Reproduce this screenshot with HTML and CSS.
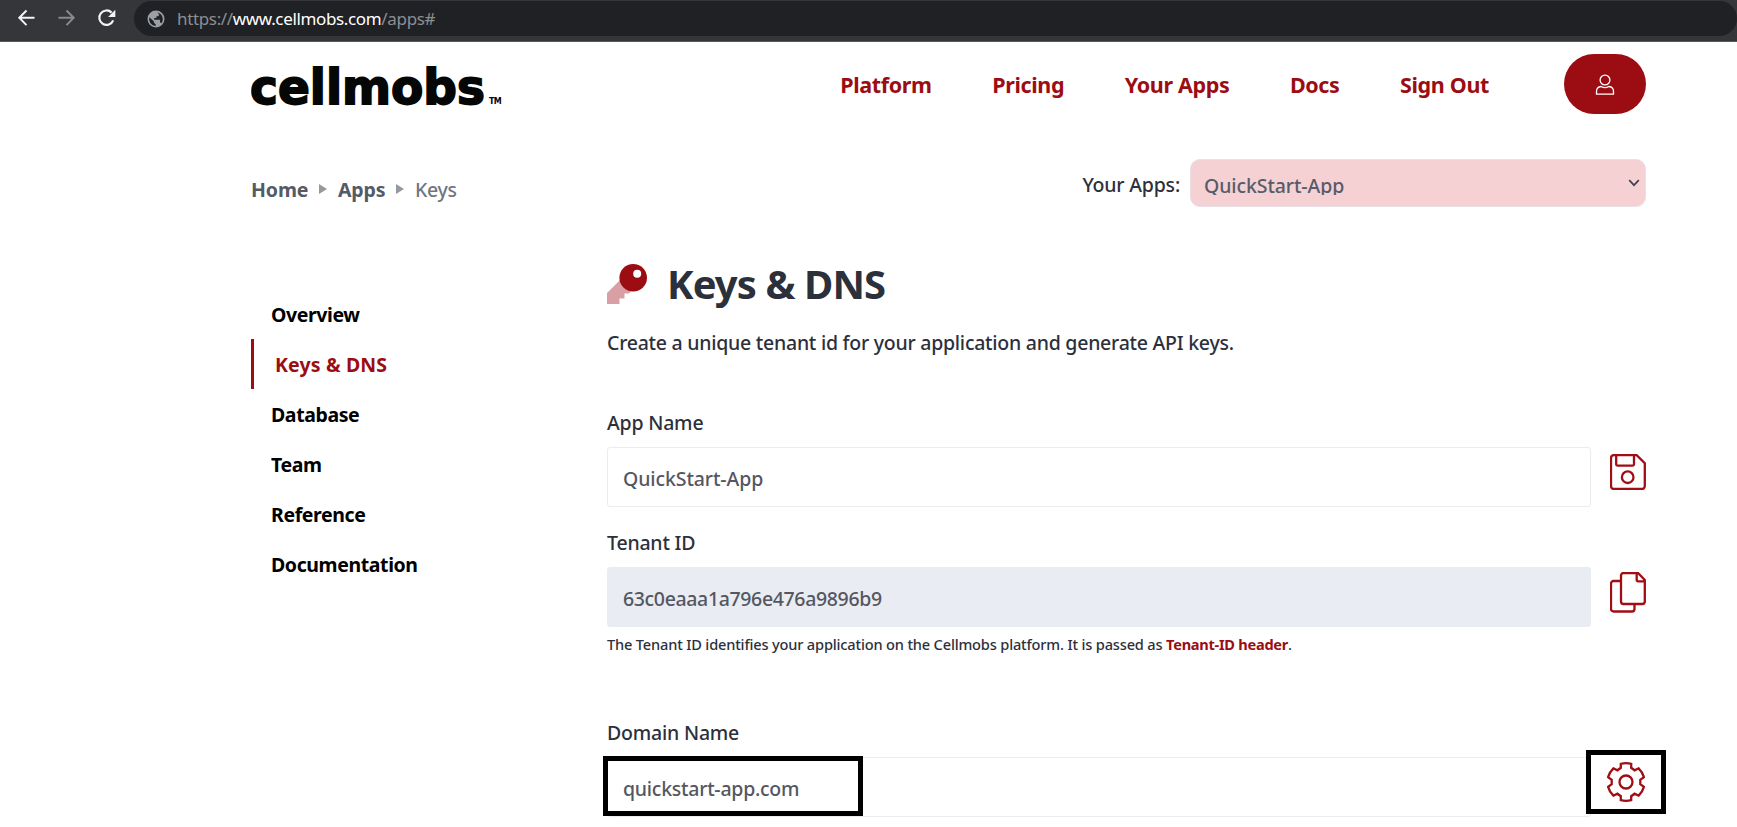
FILE: index.html
```html
<!DOCTYPE html>
<html lang="en">
<head>
<meta charset="utf-8">
<title>Keys &amp; DNS</title>
<link rel="stylesheet" href="styles.css">
</head>
<body>
<div class="browser-bar">
  <svg class="nav-icons" width="134" height="36" viewBox="0 0 134 36" fill="none" stroke-width="2">
    <path d="M34.5 17.8H19.8M26.5 10.5L19.3 17.8L26.5 25.1" stroke="#f1f3f4"/>
    <path d="M58.5 17.8H73.2M66.5 10.5L73.7 17.8L66.5 25.1" stroke="#87898d"/>
    <path d="M113.2 20.3A7.2 7.2 0 1 1 111.6 12.6" stroke="#f1f3f4" stroke-width="2.2"/>
    <path d="M115.3 9.8V17H108.1Z" fill="#f1f3f4"/>
  </svg>
  <div class="address">
    <svg class="globe" width="18" height="18" viewBox="0 0 18 18">
      <circle cx="9" cy="9" r="8.5" fill="#9aa0a6"/>
      <path d="M2.2 7.2L6.8 11.2V12.6L8.8 14.4V15.8C5 15.7 2.2 12.8 2.2 9.2ZM10.5 2.4C13.6 3.1 15.8 5.8 15.8 9C15.8 10.6 15.3 12 14.5 13.2L13 12.2V9.8H7.2V8H9.4V6.2H11.4L12.2 4.6Z" fill="#202124"/>
    </svg>
    <span class="url">https://<b>www.cellmobs.com</b>/apps#</span>
  </div>
</div>

<div class="page">
  <header class="site-header">
    <svg class="logo" width="238" height="60" viewBox="0 0 238 60">
      <text class="logo-word" x="-1" y="41.8" textLength="235" lengthAdjust="spacingAndGlyphs">cellmobs</text>
    </svg>
    <span class="tm">TM</span>
    <nav class="main-nav">
      <a>Platform</a><a>Pricing</a><a>Your Apps</a><a>Docs</a><a>Sign Out</a>
    </nav>
    <button class="account">
      <svg width="20" height="22" viewBox="0 0 20 22" fill="none" stroke="#fff" stroke-width="1.3">
        <circle cx="10" cy="6" r="4.9"/>
        <path d="M1.5 20.2V17.5C1.5 14.5 3.2 12.8 6 12.5C8.5 14 11.5 14 14 12.5C16.8 12.8 18.5 14.5 18.5 17.5V20.2Z"/>
      </svg>
    </button>
  </header>

  <div class="sub-header">
    <div class="crumbs">
      <b>Home</b><i class="arrow"></i><b>Apps</b><i class="arrow"></i><span>Keys</span>
    </div>
    <div class="picker">
      <span class="picker-label">Your Apps:</span>
      <div class="select">
        <span>QuickStart-App</span>
        <svg width="12" height="8" viewBox="0 0 12 8" fill="none" stroke="#40434c" stroke-width="1.7"><path d="M1.2 1.2L6 6.2L10.8 1.2"/></svg>
      </div>
    </div>
  </div>

  <div class="columns">
    <aside class="side-nav">
      <a>Overview</a><a class="active">Keys &amp; DNS</a><a>Database</a><a>Team</a><a>Reference</a><a>Documentation</a>
    </aside>
    <main class="content">
      <h1 class="title">
        <svg width="40" height="40" viewBox="0 0 40 40">
          <path d="M0 29L14 15L25 26L22 29.5H17.5V34.5H12.5V40H0Z" fill="#d8a0a4"/>
          <circle cx="26.2" cy="13.8" r="13.8" fill="#9c0d13"/>
          <circle cx="30.2" cy="9.8" r="4" fill="#fff"/>
        </svg>
        <span>Keys &amp; DNS</span>
      </h1>
      <p class="lead">Create a unique tenant id for your application and generate API keys.</p>

      <section class="field">
        <label>App Name</label>
        <div class="row">
          <div class="input">QuickStart-App</div>
          <svg class="action save" width="36" height="36" viewBox="0 0 36 36">
            <path d="M4 1H26.5L34.8 9.3V32A3 3 0 0 1 31.8 35H4A3 3 0 0 1 1 32V4A3 3 0 0 1 4 1ZM6.2 1V10.2A1.5 1.5 0 0 0 7.7 11.7H22.5A1.5 1.5 0 0 0 24 10.2V1"/>
            <circle cx="17.7" cy="23.2" r="5.8"/>
          </svg>
        </div>
      </section>

      <section class="field">
        <label>Tenant ID</label>
        <div class="row">
          <div class="input disabled">63c0eaaa1a796e476a9896b9</div>
          <svg class="action copy" width="36" height="41" viewBox="0 0 36 41">
            <path d="M13.5 1H28L34.8 8V29.5A2.5 2.5 0 0 1 32.3 32H13.5A2.5 2.5 0 0 1 11 29.5V3.5A2.5 2.5 0 0 1 13.5 1ZM26.7 1V7.8A1.5 1.5 0 0 0 28.2 9.3H34.8M11 9H3.5A2.5 2.5 0 0 0 1 11.5V37A2.5 2.5 0 0 0 3.5 39.5H22A2.5 2.5 0 0 0 24.5 37V32"/>
          </svg>
        </div>
        <p class="help"><span>The Tenant ID identifies your application on the Cellmobs platform. It is passed as </span><b>Tenant-ID header</b>.</p>
      </section>

      <section class="field domain">
        <label>Domain Name</label>
        <div class="row">
          <div class="input">quickstart-app.com</div>
          <span class="mark mark-input"></span>
          <span class="mark mark-gear">
            <svg width="38" height="40" viewBox="0 0 38 40">
              <path d="M13.8 1.8Q19 .6 24.2 1.8V5.8L27.6 8.3L31.6 6.3Q35.5 10 36.9 15.2L33.3 17.8V22.2L36.9 24.8Q35.5 30 31.6 33.7L27.6 31.7L24.2 34.2V38.2Q19 39.4 13.8 38.2V34.2L10.4 31.7L6.4 33.7Q2.5 30 1.1 24.8L4.7 22.2V17.8L1.1 15.2Q2.5 10 6.4 6.3L10.4 8.3L13.8 5.8Z"/>
              <circle cx="19" cy="20" r="6.5"/>
            </svg>
          </span>
        </div>
      </section>
    </main>
  </div>
</div>
</body>
</html>
```

FILE: styles.css
```css
* { box-sizing: border-box; }

body {
  margin: 0;
  height: 827px;
  overflow: hidden;
  background: #fff;
  color: #2c303b;
  font: 500 19.5px/30px "Noto Sans", "Open Sans", sans-serif;
}

svg { display: block; flex: none; }
b { font-weight: 700; }

.browser-bar {
  display: flex;
  height: 42px;
  background: #35363a;
  border-bottom: 1px solid #58595d;
}

.address {
  display: flex;
  align-items: center;
  gap: 12px;
  flex: 1;
  height: 35px;
  margin-top: 1px;
  padding-left: 13px;
  border-radius: 18px;
  background: #202124;
}

.url {
  color: #8b8f94;
  font-size: 17px;
  font-weight: 400;
  letter-spacing: -.35px;
}

.url b { color: #fff; font-weight: 400; }

.page { padding: 0 91px 0 251px; }

.site-header {
  display: flex;
  align-items: flex-start;
  height: 90px;
  padding-top: 12px;
}

.logo { margin-top: 8px; }

.logo-word {
  fill: #050707;
  stroke: #050707;
  stroke-width: 1.8px;
  font: bold 48px "DejaVu Sans", sans-serif;
}

.tm {
  margin: 42px 0 0 0;
  color: #050707;
  font: bold 8px/12px "DejaVu Sans", sans-serif;
  letter-spacing: -.8px;
}

.main-nav {
  display: flex;
  gap: 60.5px;
  margin: 16px 75px 0 auto;
  color: #9c0d13;
  font-size: 21.5px;
  font-weight: 700;
  letter-spacing: -.35px;
}

.account {
  display: grid;
  place-items: center;
  width: 82px;
  height: 60px;
  padding: 2px 0 0;
  border: 0;
  border-radius: 30px;
  background: #9c0d13;
}

.sub-header {
  display: flex;
  justify-content: space-between;
  padding-top: 27px;
}

.crumbs {
  display: flex;
  align-items: center;
  height: 30px;
  margin-top: 16px;
  color: #545a66;
  letter-spacing: -.1px;
}

.crumbs span { color: #6f7681; letter-spacing: -.3px; }

.arrow {
  margin: -3px 11px 0 10.6px;
  border: solid transparent;
  border-width: 5px 0 5px 8px;
  border-left-color: #96989d;
}

.picker { display: flex; gap: 10px; }
.picker-label { margin-top: 11px; letter-spacing: -.2px; }

.select {
  display: flex;
  align-items: center;
  justify-content: space-between;
  width: 456px;
  height: 48px;
  padding: 0 5px 0 13px;
  border: 1px solid #e9dfe5;
  border-radius: 10px;
  background: #f5d1d4;
  color: #575c68;
}

.select span {
  height: 24px;
  margin-top: -1px;
  overflow: hidden;
  line-height: 30px;
  letter-spacing: -.1px;
}

.columns { display: flex; }

.side-nav {
  display: flex;
  flex-direction: column;
  width: 357px;
  padding-top: 82px;
  color: #000;
  font-weight: 700;
  letter-spacing: -.4px;
}

.side-nav a { height: 50px; padding: 11px 20px; }

.side-nav .active {
  padding-left: 21px;
  border-left: 3px solid #9c0d13;
  color: #9c0d13;
  letter-spacing: .15px;
}

.content { flex: 1; }

.title {
  display: flex;
  gap: 20px;
  margin: 57px 0 0;
  font-size: 40px;
  font-weight: 700;
  line-height: 40px;
  letter-spacing: -.9px;
}

.lead { margin: 24px 0 0; letter-spacing: -.25px; }

.field { padding-top: 21px; }
.lead + .field { padding-top: 50px; }
.field label { display: block; letter-spacing: -.2px; }

.row {
  display: flex;
  position: relative;
  gap: 19px;
  margin-top: 9px;
}

.input {
  width: 984px;
  height: 60px;
  padding: 16px 15px;
  border: 1px solid #eaecf1;
  border-radius: 3px;
  color: #545761;
  letter-spacing: -.1px;
}

.disabled { border-color: #e9ecf2; background: #e9ecf2; letter-spacing: -.35px; }

.action, .mark svg { fill: none; stroke: #a00d14; stroke-width: 2.3; }
.save { margin-top: 7px; }
.copy { margin-top: 5px; }

.help {
  margin: 5px 0 0;
  font-size: 14.6px;
  line-height: 24px;
  letter-spacing: -.17px;
}

.help b { color: #9c0d13; letter-spacing: -.28px; }

.domain { padding-top: 62px; }
.domain .input { letter-spacing: -.25px; }

.mark { position: absolute; border: 5px solid #000; }
.mark-input { left: -4px; top: -1px; width: 260px; height: 60px; }

.mark-gear {
  display: grid;
  place-items: center;
  left: 979px;
  top: -7px;
  width: 80px;
  height: 64px;
  background: #fff;
}
```
